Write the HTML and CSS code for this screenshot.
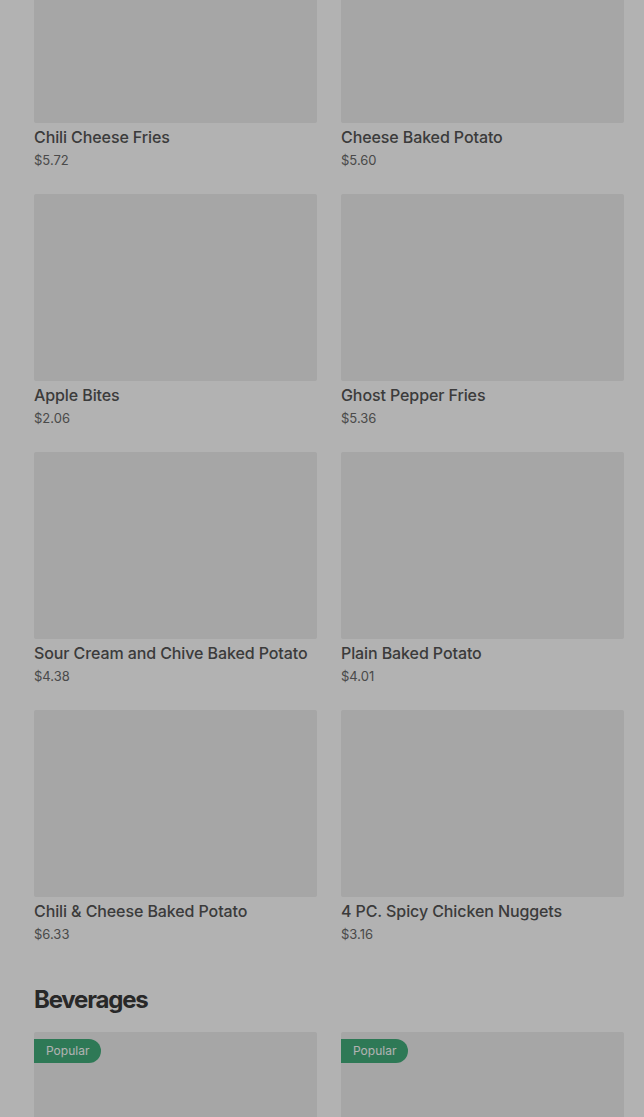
FILE: index.html
```html
<!DOCTYPE html>
<html lang="en">
<head>
    <meta charset="UTF-8">
    <meta name="viewport" content="width=device-width, initial-scale=1.0">
    <title>Menu</title>
    <link rel="stylesheet" href="styles.css">
</head>
<body>
    <div class="menu">
        <section class="category">
            <div class="grid">
                <div class="item">
                    <div class="photo"></div>
                    <div class="name">Chili Cheese Fries</div>
                    <div class="price">$5.72</div>
                </div>
                <div class="item">
                    <div class="photo"></div>
                    <div class="name">Cheese Baked Potato</div>
                    <div class="price">$5.60</div>
                </div>
                <div class="item">
                    <div class="photo"></div>
                    <div class="name">Apple Bites</div>
                    <div class="price">$2.06</div>
                </div>
                <div class="item">
                    <div class="photo"></div>
                    <div class="name">Ghost Pepper Fries</div>
                    <div class="price">$5.36</div>
                </div>
                <div class="item">
                    <div class="photo"></div>
                    <div class="name">Sour Cream and Chive Baked Potato</div>
                    <div class="price">$4.38</div>
                </div>
                <div class="item">
                    <div class="photo"></div>
                    <div class="name">Plain Baked Potato</div>
                    <div class="price">$4.01</div>
                </div>
                <div class="item">
                    <div class="photo"></div>
                    <div class="name">Chili &amp; Cheese Baked Potato</div>
                    <div class="price">$6.33</div>
                </div>
                <div class="item">
                    <div class="photo"></div>
                    <div class="name">4 PC. Spicy Chicken Nuggets</div>
                    <div class="price">$3.16</div>
                </div>
            </div>
        </section>

        <section class="category">
            <h2>Beverages</h2>
            <div class="grid">
                <div class="item">
                    <div class="photo"><span class="badge">Popular</span></div>
                </div>
                <div class="item">
                    <div class="photo"><span class="badge">Popular</span></div>
                </div>
            </div>
        </section>
    </div>
    <div class="dim"></div>
</body>
</html>
```

FILE: styles.css
```css
body {
    margin: 0;
    font-family: Inter, "Liberation Sans", sans-serif;
    background: #fff;
    height: 1117px;
    overflow: hidden;
}
.menu {
    margin-top: -64px;
    padding: 0 20px 0 34px;
}
.category h2 {
    margin: 0;
    padding: 39px 0 17px;
    font-size: 24px;
    line-height: 30px;
    font-weight: 700;
    letter-spacing: -1.2px;
    color: #3a3a3a;
}
.grid {
    display: grid;
    grid-template-columns: 1fr 1fr;
    column-gap: 24px;
    row-gap: 22px;
}
.photo {
    position: relative;
    height: 187px;
    background: #eeeeee;
    border-radius: 2px;
}
.name {
    margin-top: 3px;
    font-size: 16px;
    line-height: 22px;
    font-weight: 500;
    letter-spacing: -0.1px;
    color: #555;
    white-space: nowrap;
}
.price {
    font-size: 13px;
    line-height: 24px;
    color: #6a6a6a;
}
.badge {
    position: absolute;
    top: 7px;
    left: 0;
    padding: 0 12px;
    height: 24px;
    line-height: 24px;
    font-size: 12px;
    color: #fff;
    background: #43ae7c;
    border-radius: 0 12px 12px 0;
}
.dim {
    position: fixed;
    inset: 0;
    background: rgba(0, 0, 0, 0.3);
}
```
